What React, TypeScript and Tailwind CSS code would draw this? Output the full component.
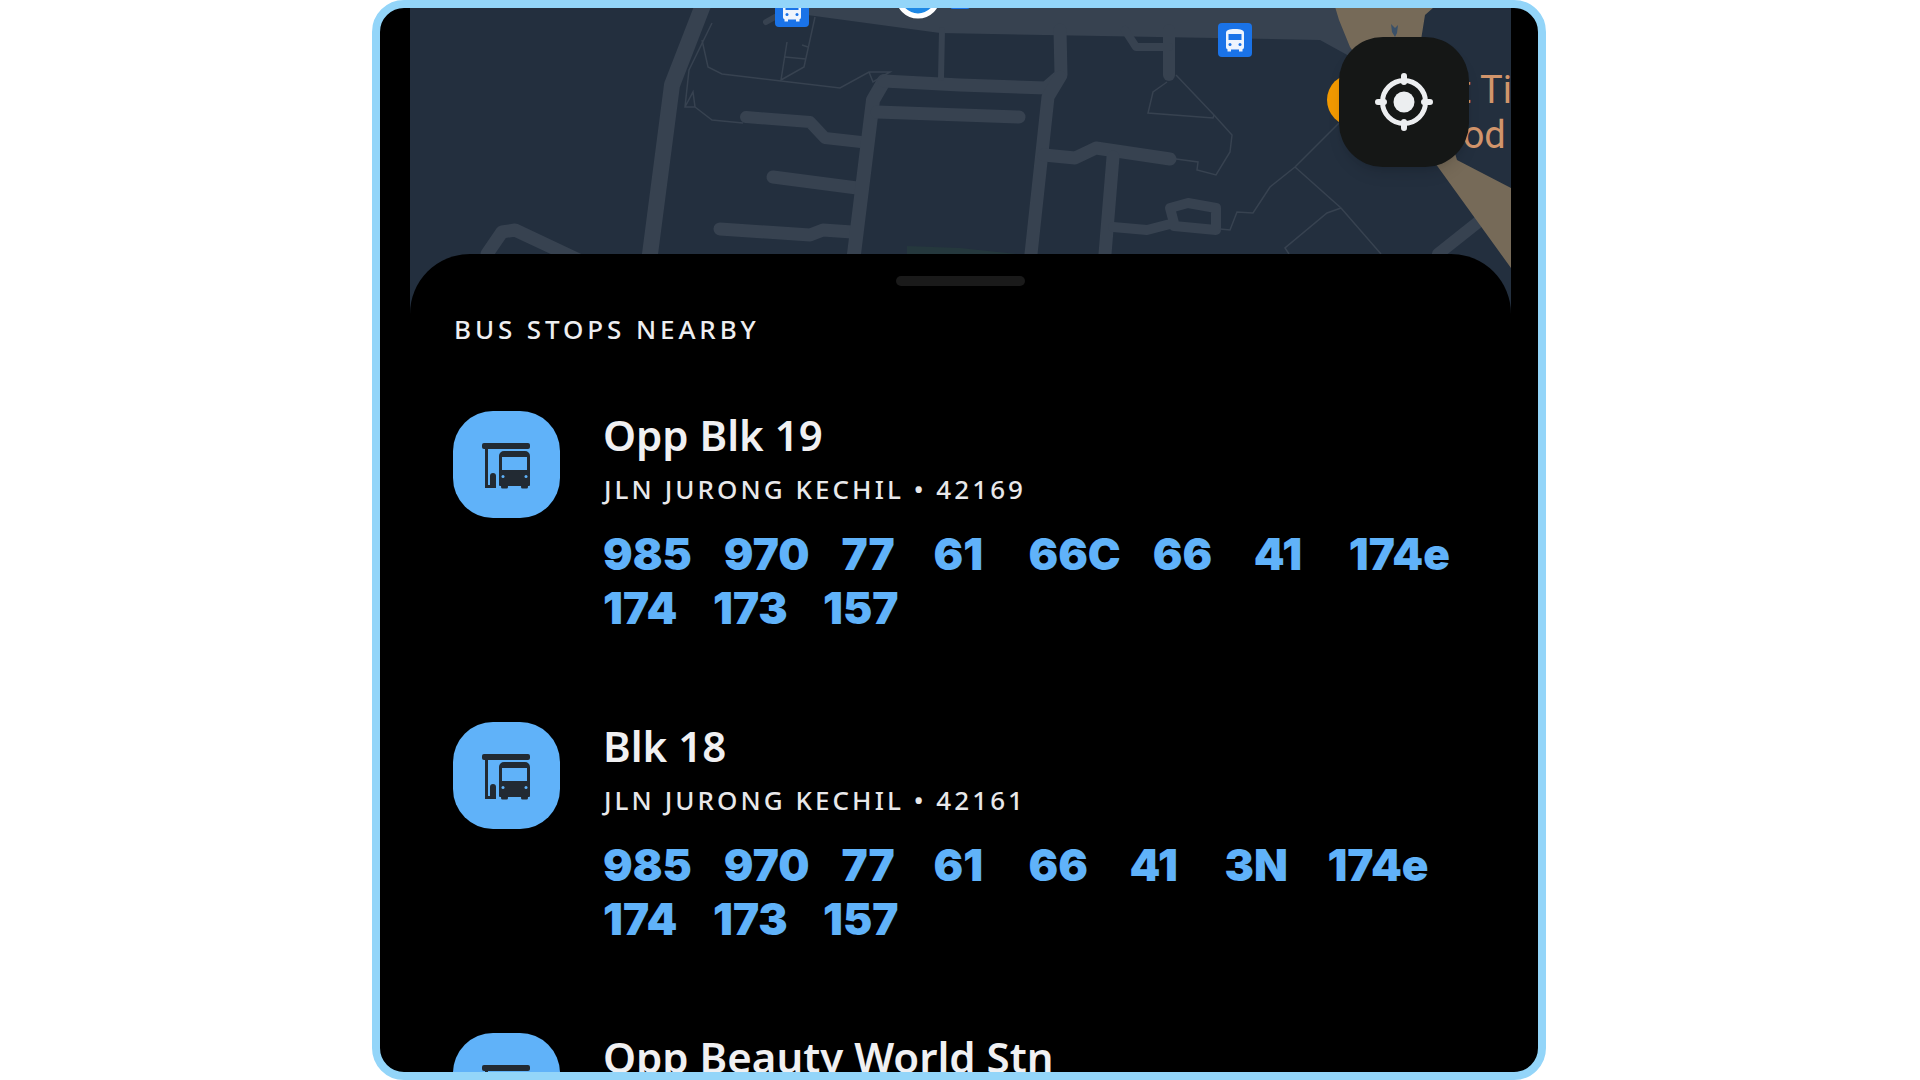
const ROAD = "#374250";

const THICK_ROADS: [string, number][] = [
  ["705,0 672,85 650,254 645,300", 16],
  ["746,117 810,122 825,138 861,142", 12],
  ["773,177 857,188", 13],
  ["720,229 810,235 823,230 852,232", 13],
  ["884,81 873,100 854,254 850,300", 14],
  ["884,81 960,85 1046,88 1061,75 1060,30", 13],
  ["877,112 1019,117", 13],
  ["942,30 941,78", 6],
  ["1060,77 1048,97 1031,254 1028,300", 13],
  ["1044,155 1075,158 1096,148 1170,159", 13],
  ["1113,157 1105,254 1102,300", 13],
  ["1169,30 1169,75", 12],
  ["1125,30 1136,47 1169,47", 8],
  ["1113,227 1147,230 1174,223 1170,208 1188,203 1216,208 1216,230 1174,226", 10],
  ["487,254 502,232 515,230 600,270", 13],
  ["766,22 775,17", 6],
  ["1438,254 1477,223 1511,197", 12],
];

const THIN_ROADS = [
  "1176,75 1214,115 1232,135 1230,152 1216,175 1197,170 1198,162 1176,159",
  "1167,82 1153,92 1148,113 1213,118 1214,115",
  "1339,123 1295,167 1270,187 1253,213 1237,212 1230,230 1220,229",
  "1295,167 1341,208 1381,254",
  "1341,208 1327,213 1285,248 1289,254",
  "712,23 689,70 685,107 695,107 693,92 685,107",
  "702,40 708,67 722,74 840,88 869,72 890,72 873,82 869,72",
  "695,107 712,120 743,123",
  "815,17 804,67 781,80 787,42",
  "785,57 806,59",
  "802,45 808,47",
];

function BusMarker({ x, y, size }: { x: number; y: number; size: number }) {
  const k = size / 34;
  return (
    <g transform={`translate(${x} ${y}) scale(${k})`}>
      <rect width="34" height="34" rx="4" fill="#1a73e8" />
      <path
        d="M17 6c-6 0-9 1-9 4v14c0 1 .5 2 1.500 2.300V28.500h3.500V26.500h8V28.500h3.500V26.300c1-.3 1.500-1.300 1.500-2.300V10c0-3-3-4-9-4zM10.500 11h13v6h-13z"
        fill="#eef4fd"
        fillRule="evenodd"
      />
      <circle cx="12" cy="21.500" r="1.500" fill="#1a73e8" />
      <circle cx="22" cy="21.500" r="1.500" fill="#1a73e8" />
    </g>
  );
}

function MapView() {
  return (
    <svg viewBox="410 8 1101 310" className="block h-[310px] w-[1101px]">
      <rect x="410" y="0" width="1101" height="320" fill="#232f3e" />
      <polygon points="907,246 960,248 1017,254 1017,260 907,260" fill="#25383d" />
      <polygon points="800,0 800,14 940,33 1320,40 1360,62 1400,0" fill={ROAD} />
      {THICK_ROADS.map(([points, width]) => (
        <polyline
          key={points}
          points={points}
          fill="none"
          stroke={ROAD}
          strokeWidth={width}
          strokeLinecap="round"
          strokeLinejoin="round"
        />
      ))}
      {THIN_ROADS.map((points) => (
        <polyline key={points} points={points} fill="none" stroke={ROAD} strokeWidth="1.500" />
      ))}
      <polygon points="1333,0 1442,0 1425,15 1421,40 1457,160 1511,188 1511,268 1438,167 1350,47 1339,20" fill="#766a58" />
      <path d="M1391 24l4 4 3-3-1 8-2 4-3-5z" fill="#3a5068" />
      <circle cx="1353" cy="100" r="26" fill="#f29900" />
      <text x="1459" y="103" fontFamily="Roboto, sans-serif" fontSize="38" fill="#d2956b">
        t Ti
      </text>
      <text x="1441" y="148" fontFamily="Roboto, sans-serif" fontSize="38" fill="#d2956b">
        ood
      </text>
      <BusMarker x={775} y={-7} size={34} />
      <BusMarker x={1218} y={23} size={34} />
      <circle cx="918" cy="-4" r="20" fill="#1e88e5" stroke="#ffffff" strokeWidth="5" />
      <rect x="950" y="0" width="20" height="9" rx="3" fill="#1a73e8" />
    </svg>
  );
}

function LocateIcon() {
  return (
    <svg viewBox="0 0 64 64" className="h-16 w-16">
      <circle cx="32" cy="32" r="21.500" fill="none" stroke="#eceef0" strokeWidth="5" />
      <circle cx="32" cy="32" r="10.500" fill="#eceef0" />
      <path d="M32 6v6M32 52v6M6 32h6M52 32h6" stroke="#eceef0" strokeWidth="6" strokeLinecap="round" />
    </svg>
  );
}

function BusStopIcon() {
  return (
    <svg viewBox="0 0 107 107" className="h-full w-full">
      <g fill="#222a33">
        <rect x="29" y="32" width="48" height="6" rx="2" />
        <rect x="32" y="36" width="3" height="41" />
        <rect x="32" y="74" width="11" height="3" />
        <rect x="37" y="62" width="6" height="15" rx="3" />
        <path
          fillRule="evenodd"
          d="M51 40h21a5 5 0 0 1 5 5v29a1 1 0 0 1-1 1H47a1 1 0 0 1-1-1V45a5 5 0 0 1 5-5zM49 46v13h25V46z"
        />
        <rect x="48" y="74" width="7" height="3.500" rx="1.500" />
        <rect x="68" y="74" width="7" height="3.500" rx="1.500" />
      </g>
      <circle cx="50" cy="65.500" r="1.500" fill="#60b2f9" />
      <circle cx="73" cy="65.500" r="1.500" fill="#60b2f9" />
    </svg>
  );
}

const STOPS = [
  {
    name: "Opp Blk 19",
    road: "JLN JURONG KECHIL • 42169",
    routes: ["985", "970", "77", "61", "66C", "66", "41", "174e", "174", "173", "157"],
  },
  {
    name: "Blk 18",
    road: "JLN JURONG KECHIL • 42161",
    routes: ["985", "970", "77", "61", "66", "41", "3N", "174e", "174", "173", "157"],
  },
  {
    name: "Opp Beauty World Stn",
    road: "JLN JURONG KECHIL • 42139",
    routes: ["985", "970"],
  },
];

// the shorter numbers sit in slots a bit wider than their text
const SLOT_WIDTH: Record<string, string> = {
  "41": "min-w-[63px]",
  "61": "min-w-[63px]",
  "66": "min-w-[69px]",
  "3N": "min-w-[71px]",
  "174": "min-w-[78px]",
  "173": "min-w-[78px]",
};

function StopRow({ stop }: { stop: (typeof STOPS)[number] }) {
  return (
    <div className="flex h-[311px] gap-[43px]">
      <div className="h-[107px] w-[107px] shrink-0 rounded-[40px] bg-[#60b2f9]">
        <BusStopIcon />
      </div>
      <div className="min-w-0 flex-1">
        <div className="-mt-px font-['Noto_Sans',sans-serif] text-[42px] leading-[50px] font-semibold text-[#f0f0f2]">
          {stop.name}
        </div>
        <div className="mt-[10px] pl-px font-['Noto_Sans',sans-serif] text-[26px] leading-[38px] font-medium tracking-[0.118em] text-[#e8e8ea]">
          {stop.road}
        </div>
        <div className="mt-[19px] flex w-[880px] flex-wrap gap-x-[32px] font-['Inter',sans-serif] text-[44px] leading-[54px] font-black text-[#60b2f9]">
          {stop.routes.map((route) => (
            <span key={route} className={SLOT_WIDTH[route] ?? "min-w-[60px]"}>
              {route}
            </span>
          ))}
        </div>
      </div>
    </div>
  );
}

export default function App() {
  return (
    <div className="h-[1080px] overflow-hidden bg-white">
      <div className="relative ml-[372px] h-[1080px] w-[1174px] overflow-hidden rounded-[32px] border-[8px] border-[#93d5f9] bg-black">
        <div className="mx-[30px] w-[1101px]">
          <MapView />
          <div className="relative -mt-[64px] h-[820px] rounded-t-[60px] bg-black pt-[22px]">
            <div className="mx-auto h-[10px] w-[129px] rounded-full bg-[#1a1a1a]" />
            <div className="mt-[27px] ml-[44px] font-['Noto_Sans',sans-serif] text-[26px] leading-[32px] font-medium tracking-[0.15em] text-[#eeeef0]">
              BUS STOPS NEARBY
            </div>
            <div className="mt-[66px] ml-[43px]">
              {STOPS.map((stop) => (
                <StopRow key={stop.name} stop={stop} />
              ))}
            </div>
          </div>
        </div>
        <div className="absolute top-[29px] left-[959px] flex h-[130px] w-[130px] items-center justify-center rounded-[44px] bg-[#151716] shadow-lg">
          <LocateIcon />
        </div>
      </div>
    </div>
  );
}
